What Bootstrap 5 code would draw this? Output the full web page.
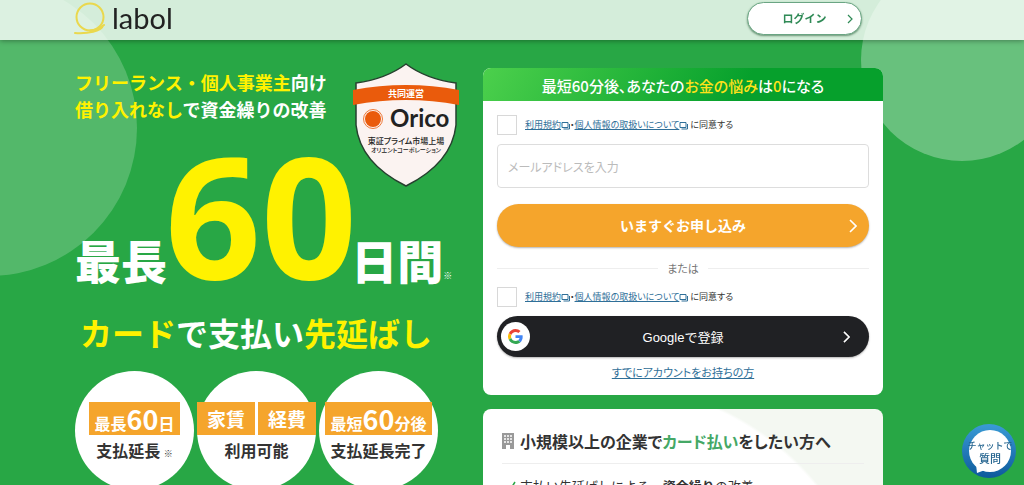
<!DOCTYPE html>
<html lang="ja">
<head>
<meta charset="utf-8">
<meta name="viewport" content="width=device-width, initial-scale=1">
<title>labol</title>
<link href="https://cdn.jsdelivr.net/npm/bootstrap@5.3.0/dist/css/bootstrap.min.css" rel="stylesheet">
<style>
:root { --jp: "Noto Sans CJK JP", sans-serif; --green: #28a745; --lemon: #fff200; --amber: #f5a52c; --ink: #333; }
body { font-family: var(--jp); font-feature-settings: "palt"; background: var(--green); color: var(--ink); }
.site-head { background: rgba(255,255,255,.8); height: 40px; padding: 0 162px 0 74px; box-shadow: 0 1px 5px rgba(0,0,0,.35); }
.logo { color: #222; font: 400 29px/36px Lato, sans-serif; gap: 5px; }
.login { width: 115px; height: 33px; margin-bottom: 3px; border: 1px solid #6aa583; box-shadow: 0 1px 2px rgba(0,60,20,.5); color: #2f8a56; font-size: 11px; }
.login:hover { background: #fff; }
.login svg { right: 8px; }
.chev { position: absolute; top: 50%; transform: translateY(-50%); }
.hero { position: relative; overflow: hidden; padding: 68px 141px 40px 75px; }
.bubble { position: absolute; border-radius: 50%; }
.bubble-a { width: 296px; height: 296px; left: -159px; top: -20px; background: rgba(255,255,255,.2); }
.bubble-b { width: 202px; height: 202px; right: -39px; top: -41px; background: rgba(255,255,255,.3); }
.hero-row { position: relative; gap: 22px; }
.pitch { flex: 1 1 0; min-width: 0; color: #fff; }
.signup { flex: 0 0 400px; }
.y { color: var(--lemon); }
.lead-copy { font-size: 18px; line-height: 27px; padding-top: 1px; white-space: nowrap; font-feature-settings: normal; }
.shield { position: absolute; left: 278px; top: -7px; }
.big-copy { font-size: 46px; line-height: 168px; height: 168px; margin-top: 7px; white-space: nowrap; font-weight: 900; font-feature-settings: normal; }
.big-copy .num { font-family: "Noto Sans", sans-serif; font-weight: 700; font-size: 168px; margin: 0 -6px 0 -2px; }
.note { font-size: 9px; font-weight: 400; }
.card-copy { font-size: 32px; line-height: 40px; margin: 14px 0 19px 5px; white-space: nowrap; font-feature-settings: normal; }
.points { gap: 3px; }
.point { width: 119px; height: 119px; border-radius: 50%; background: #fff; color: var(--ink); padding-top: 31px; font-size: 16px; line-height: 30px; font-weight: 700; white-space: nowrap; }
.tag { background: var(--amber); color: #fff; height: 33px; line-height: 33px; padding: 0 6px; font-size: 16px; }
.tag .n { font-size: 27px; line-height: 33px; }
.tag.word { font-size: 19px; padding: 0 10px; }
.panel { background: #fff; border-radius: 8px; overflow: hidden; }
.panel-head { background: linear-gradient(120deg, #4cd04c, #06a02c 65%); color: #fff; font-size: 15px; line-height: 36px; height: 33px; font-weight: 500; }
.panel-head .hl { color: #ffe21a; }
.panel-body { padding: 14px 14px 15px; }
.agree { gap: 8px; font-size: 9px; line-height: 20px; }
.agree input { width: 20px; height: 20px; margin: 0; border: 1px solid #d8d8d8; border-radius: 1px; flex: none; }
.agree a, .have a { color: #2f6f98; }
.mail { height: 44px; border: 1px solid #ddd; border-radius: 4px; font-size: 12px; padding: 0 10px; margin: 9px 0 16px; font-feature-settings: "palt"; }
.mail::placeholder { color: #bbb; }
.cta { height: 43px; position: relative; border: 0; border-radius: 22px; box-shadow: 0 1px 2px rgba(0,0,0,.3); color: #fff; }
.cta-main, .cta-main:hover { background: var(--amber); color: #fff; font-weight: 700; font-size: 14px; font-feature-settings: normal; }
.cta-google, .cta-google:hover { background: #202124; color: #fff; font: 400 13px "Liberation Sans", "Noto Sans CJK JP", sans-serif; height: 41px; margin-top: 9px; }
.g { position: absolute; left: 4px; top: 6px; width: 29px; height: 29px; border-radius: 50%; background: #fff; }
.or { gap: 9px; font-size: 11px; line-height: 20px; color: #777; margin: 11px 0 9px; }
.or::before, .or::after { content: ""; flex: 1; border-top: 1px solid #eee; }
.have { font-size: 11px; line-height: 16px; margin-top: 7px; }
.biz { margin-top: 14px; padding: 20px 19px; background: radial-gradient(circle at 120px 250px, #fff 274px, #f4f8f2 277px); }
.biz h2 { font-size: 16px; line-height: 24px; gap: 6px; padding-bottom: 10px; margin: 0; border-bottom: 1px solid #eee; }
.biz h2 span span { color: #45a866; }
.biz li { font-size: 13px; line-height: 20px; gap: 4px; font-feature-settings: normal; }
.chat { position: fixed; right: 8px; bottom: 7px; width: 54px; height: 54px; border: 0; padding: 0; border-radius: 50%; background: none; }
</style>
</head>
<body>
<header class="site-head fixed-top d-flex justify-content-between align-items-center">
  <a class="logo d-flex align-items-start text-decoration-none h-100" href="#">
    <svg width="33" height="36" viewBox="0 0 33 36" fill="none" stroke="#ead84d" stroke-width="2" stroke-linecap="round"><circle cx="16" cy="17" r="13.500"/><path d="M1 33C14 34 27 31 29 26M16 30.500Q24 30 30 25"/></svg>
    <span>labol</span>
  </a>
  <button class="login btn bg-white rounded-pill fw-bold p-0 position-relative" type="button">ログイン
    <svg class="chev" width="6" height="10" viewBox="0 0 6 10" fill="none" stroke="currentColor" stroke-width="1.200"><path d="M1 1l4 4-4 4"/></svg>
  </button>
</header>

<main class="hero">
  <div class="bubble bubble-a"></div>
  <div class="bubble bubble-b"></div>
  <div class="hero-row d-flex align-items-start">
    <section class="pitch">
      <p class="lead-copy fw-bold mb-0"><span class="y">フリーランス・個人事業主</span>向け<br><span class="y">借り入れなし</span>で資金繰りの改善</p>
      <svg class="shield" width="106" height="128" viewBox="0 0 106 128">
        <path d="M53 3Q73 18 103 22V64Q99 102 53 125Q7 102 3 64V22Q33 18 53 3Z" fill="#fbf3f1" stroke="#26402f" stroke-width="1.500"/>
        <path d="M0 29Q53 19 106 29V44Q53 34 0 44Z" fill="#ea5b0c"/>
        <text x="53" y="36" text-anchor="middle" font-size="9" font-weight="700" fill="#fff">共同運営</text>
        <circle cx="20" cy="58" r="9.500" fill="none" stroke="#ea5b0c" stroke-width=".8"/><circle cx="20" cy="58" r="8" fill="#ea5b0c"/>
        <text x="37" y="66" font-family="Lato, sans-serif" font-size="24" font-weight="700" fill="#222">Orico</text>
        <text x="53" y="83" text-anchor="middle" font-size="8" font-weight="500" fill="#222">東証プライム市場上場</text>
        <text x="53" y="91" text-anchor="middle" font-size="6" font-weight="500" fill="#222">オリエントコーポレーション</text>
      </svg>
      <h1 class="big-copy mb-0">最長<span class="num y">60</span>日間<span class="note">※</span></h1>
      <p class="card-copy fw-bold"><span class="y">カード</span>で支払い<span class="y">先延ばし</span></p>
      <div class="points d-flex">
        <div class="point d-flex flex-column align-items-center">
          <div class="tag">最長<span class="n">60</span>日</div>
          <div>支払延長 <span class="note">※</span></div>
        </div>
        <div class="point d-flex flex-column align-items-center">
          <div class="d-flex points"><div class="tag word">家賃</div><div class="tag word">経費</div></div>
          <div>利用可能</div>
        </div>
        <div class="point d-flex flex-column align-items-center">
          <div class="tag">最短<span class="n">60</span>分後</div>
          <div>支払延長完了</div>
        </div>
      </div>
    </section>

    <section class="signup">
      <form class="panel">
        <div class="panel-head text-center">最短60分後、あなたの<span class="hl">お金の悩み</span>は<span class="hl">0</span>になる</div>
        <div class="panel-body">
          <div class="agree d-flex align-items-center">
            <input class="form-check-input rounded-0" type="checkbox" id="agree-mail">
            <label for="agree-mail"><a href="#">利用規約<svg width="9" height="9" viewBox="0 0 9 9" fill="none" stroke="currentColor"><path d="M1 1.500h6v5H1zM2.500 8h6V3"/></svg></a>・<a href="#">個人情報の取扱いについて<svg width="9" height="9" viewBox="0 0 9 9" fill="none" stroke="currentColor"><path d="M1 1.500h6v5H1zM2.500 8h6V3"/></svg></a> に同意する</label>
          </div>
          <input class="mail form-control" type="email" placeholder="メールアドレスを入力" aria-label="メールアドレス">
          <button class="cta cta-main btn w-100" type="button">いますぐお申し込み
            <svg class="chev" style="right:12px" width="8" height="14" viewBox="0 0 8 14" fill="none" stroke="currentColor" stroke-width="1.600"><path d="M1 1l6 6-6 6"/></svg>
          </button>
          <div class="or d-flex align-items-center">または</div>
          <div class="agree d-flex align-items-center">
            <input class="form-check-input rounded-0" type="checkbox" id="agree-google">
            <label for="agree-google"><a href="#">利用規約<svg width="9" height="9" viewBox="0 0 9 9" fill="none" stroke="currentColor"><path d="M1 1.500h6v5H1zM2.500 8h6V3"/></svg></a>・<a href="#">個人情報の取扱いについて<svg width="9" height="9" viewBox="0 0 9 9" fill="none" stroke="currentColor"><path d="M1 1.500h6v5H1zM2.500 8h6V3"/></svg></a> に同意する</label>
          </div>
          <button class="cta cta-google btn w-100" type="button">
            <span class="g d-flex align-items-center justify-content-center"><svg width="15" height="15" viewBox="0 0 48 48"><path fill="#EA4335" d="M24 9.500c3.540 0 6.710 1.220 9.210 3.600l6.850-6.850C35.900 2.380 30.470 0 24 0 14.620 0 6.510 5.380 2.560 13.220l7.980 6.190C12.430 13.720 17.740 9.500 24 9.500z"/><path fill="#4285F4" d="M46.980 24.550c0-1.570-.15-3.090-.38-4.550H24v9.020h12.940c-.58 2.960-2.260 5.480-4.780 7.180l7.730 6c4.510-4.180 7.090-10.360 7.090-17.650z"/><path fill="#FBBC05" d="M10.530 28.590A14.500 14.500 0 0 1 9.770 24c0-1.600.27-3.140.76-4.590l-7.980-6.190A24 24 0 0 0 0 24c0 3.880.92 7.540 2.560 10.780z"/><path fill="#34A853" d="M24 48c6.480 0 11.930-2.130 15.890-5.810l-7.730-6c-2.150 1.450-4.920 2.300-8.160 2.300-6.260 0-11.570-4.220-13.470-9.910l-7.980 6.190C6.510 42.620 14.620 48 24 48z"/></svg></span>Googleで登録
            <svg class="chev" style="right:19px" width="7" height="12" viewBox="0 0 8 14" fill="none" stroke="currentColor" stroke-width="1.800"><path d="M1 1l6 6-6 6"/></svg>
          </button>
          <div class="have text-center"><a href="#">すでにアカウントをお持ちの方</a></div>
        </div>
      </form>

      <div class="panel biz">
        <h2 class="d-flex align-items-center fw-bold">
          <svg width="12" height="16" viewBox="0 0 12 16"><path d="M0 0h12v16H8v-4H4v4H0z" fill="#999"/><path d="M2 2h2v2H2zM5 2h2v2H5zM8 2h2v2H8zM2 5h2v2H2zM5 5h2v2H5zM8 5h2v2H8zM2 8h2v2H2zM5 8h2v2H5zM8 8h2v2H8z" fill="#e4e4e4"/></svg>
          <span>小規模以上の企業で<span>カード払い</span>をしたい方へ</span>
        </h2>
        <ul class="list-unstyled mb-0 pt-2 mt-1">
          <li class="d-flex align-items-center ms-1"><svg width="10" height="10" viewBox="0 0 10 10" fill="none" stroke="#28a745" stroke-width="1.500"><path d="M1 5l3 4 5-8"/></svg><span>支払い先延ばしによる、<strong>資金繰り</strong>の改善</span></li>
        </ul>
      </div>
    </section>
  </div>
</main>

<button class="chat" type="button" aria-label="チャットで質問">
  <svg class="d-block" width="54" height="54" viewBox="0 0 54 54">
    <defs><linearGradient id="sea" x2="0" y2="1"><stop offset="0" stop-color="#3a9bd6"/><stop offset="1" stop-color="#0d5a9c"/></linearGradient></defs>
    <circle cx="27" cy="27" r="27" fill="url(#sea)"/><circle cx="28" cy="27" r="21" fill="#fff"/><path d="M14 40l1 9 8-3z" fill="#fff"/>
    <text x="28" y="25" text-anchor="middle" font-size="9" font-weight="500" fill="#24648f">チャットで</text>
    <text x="28" y="39" text-anchor="middle" font-size="11" font-weight="500" fill="#24648f">質問</text>
  </svg>
</button>
<script src="https://cdn.jsdelivr.net/npm/bootstrap@5.3.0/dist/js/bootstrap.bundle.min.js"></script>
</body>
</html>
